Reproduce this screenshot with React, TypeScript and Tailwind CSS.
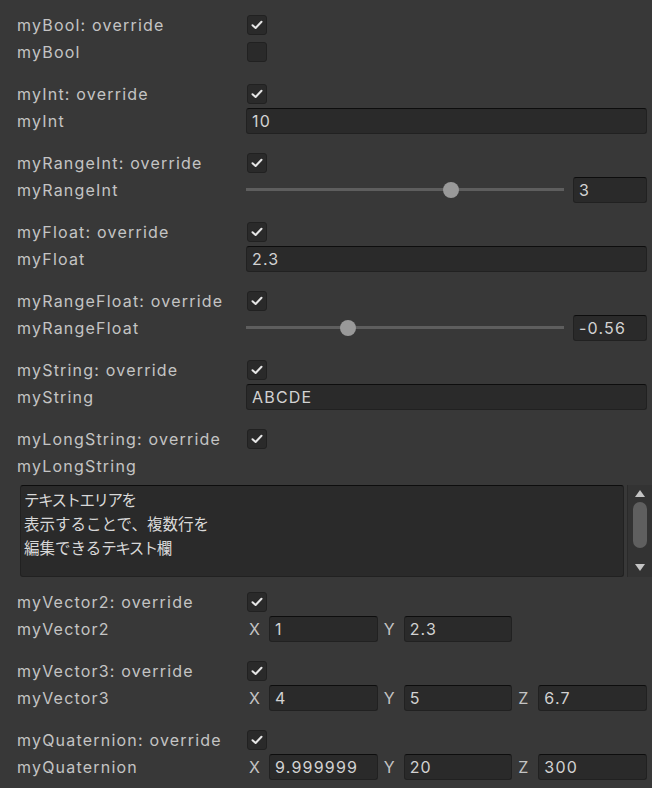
import type { ReactNode } from "react";

const font = { fontFamily: "Inter, 'Noto Sans', sans-serif" };

const Check = ({ on }: { on: boolean }) => (
  <div className="ml-[1px] w-[20px] h-[20px] rounded-[3px] bg-[#2a2a2a] border border-[#212121] flex items-center justify-center">
    {on && (
      <svg width="12" height="10" viewBox="0 0 12 10">
        <path d="M1.5 5.2 L4.6 8 L10.5 1.8" fill="none" stroke="#e6e6e6" strokeWidth="2" strokeLinecap="round" strokeLinejoin="round" />
      </svg>
    )}
  </div>
);

const Field = ({ value, className = "" }: { value: string; className?: string }) => (
  <div
    className={
      "h-[26px] rounded-[3px] bg-[#2a2a2a] border border-[#212121] border-t-[#0d0d0d] pl-[5px] flex items-center text-[#d2d2d2] overflow-hidden whitespace-nowrap " +
      className
    }
  >
    {value}
  </div>
);

const Row = ({ label, children }: { label: string; children: ReactNode }) => (
  <div className="h-[27px] flex items-center">
    <div className="w-[229px] shrink-0 text-[#c4c4c4] pt-[1px]">{label}</div>
    <div className="flex-1 flex items-center">{children}</div>
  </div>
);

const Slider = ({ pct, value }: { pct: number; value: string }) => (
  <div className="flex-1 flex items-center">
    <div className="relative w-[318px] h-[16px] flex items-center">
      <div className="w-full h-[3px] bg-[#5e5e5e]" />
      <div
        className="absolute w-[16px] h-[16px] rounded-full bg-[#999999]"
        style={{ left: `calc(${pct}% - 8px)` }}
      />
    </div>
    <Field value={value} className="ml-[9px] w-[74px] h-[25px]" />
  </div>
);

const Vec = ({ items }: { items: [string, string][] }) => (
  <div className="flex-1 grid grid-cols-3 gap-[3px]">
    {items.map(([k, v]) => (
      <div key={k} className="flex items-center">
        <span className="w-[23px] shrink-0 pl-[3px] text-[#c4c4c4]">{k}</span>
        <Field value={v} className="flex-1" />
      </div>
    ))}
  </div>
);

const Group = ({ name, children }: { name: string; children: ReactNode }) => (
  <div className="mb-[15px]">
    <Row label={`${name}: override`}>
      <Check on />
    </Row>
    <Row label={name}>{children}</Row>
  </div>
);

// katakana runs are set a bit tighter, like the editor font
const K = ({ children }: { children: ReactNode }) => <span className="tracking-[-1.5px]">{children}</span>;

export default function App() {
  return (
    <div
      className="w-[652px] h-[788px] bg-[#383838] pt-[11px] pl-[17px] pr-[5px] text-[16px] tracking-[0.075em] overflow-hidden"
      style={font}
    >
      <Group name="myBool">
        <Check on={false} />
      </Group>
      <Group name="myInt">
        <Field value="10" className="flex-1" />
      </Group>
      <Group name="myRangeInt">
        <Slider pct={64.5} value="3" />
      </Group>
      <Group name="myFloat">
        <Field value="2.3" className="flex-1" />
      </Group>
      <Group name="myRangeFloat">
        <Slider pct={32} value="-0.56" />
      </Group>
      <Group name="myString">
        <Field value="ABCDE" className="flex-1" />
      </Group>

      <div className="mb-[11px]">
        <Row label="myLongString: override">
          <Check on />
        </Row>
        <Row label="myLongString">{null}</Row>
        <div className="mt-[6px] flex h-[92px] -mr-[5px]">
          <div
            className="ml-[3px] w-[604px] h-[92px] rounded-[3px] bg-[#2a2a2a] border border-[#212121] border-t-[#0d0d0d] pl-[3px] pt-[1px] text-[#d8d8d8] leading-[24px] text-[15.5px] tracking-normal whitespace-nowrap"
            style={{ fontFamily: "'Noto Sans CJK JP', sans-serif" }}
          >
            <div>
              <K>テキストエリア</K>を
            </div>
            <div>表示することで、複数行を</div>
            <div>
              編集できる<K>テキスト</K>欄
            </div>
          </div>
          <div className="ml-[3px] w-[25px] h-[92px] bg-[#333333] border-l border-[#2a2a2a] flex flex-col items-center">
            <svg width="10" height="7" viewBox="0 0 10 7" className="mt-[5px]">
              <path d="M5 0 L10 7 L0 7 Z" fill="#c4c4c4" />
            </svg>
            <div className="mt-[5px] w-[14px] h-[46px] rounded-[7px] bg-[#5f5f5f]" />
            <div className="flex-1" />
            <svg width="10" height="7" viewBox="0 0 10 7" className="mb-[6px]">
              <path d="M0 0 L10 0 L5 7 Z" fill="#c4c4c4" />
            </svg>
          </div>
        </div>
      </div>

      <Group name="myVector2">
        <Vec items={[["X", "1"], ["Y", "2.3"]]} />
      </Group>
      <Group name="myVector3">
        <Vec items={[["X", "4"], ["Y", "5"], ["Z", "6.7"]]} />
      </Group>
      <Group name="myQuaternion">
        <Vec items={[["X", "9.999999"], ["Y", "20"], ["Z", "300"]]} />
      </Group>
    </div>
  );
}
